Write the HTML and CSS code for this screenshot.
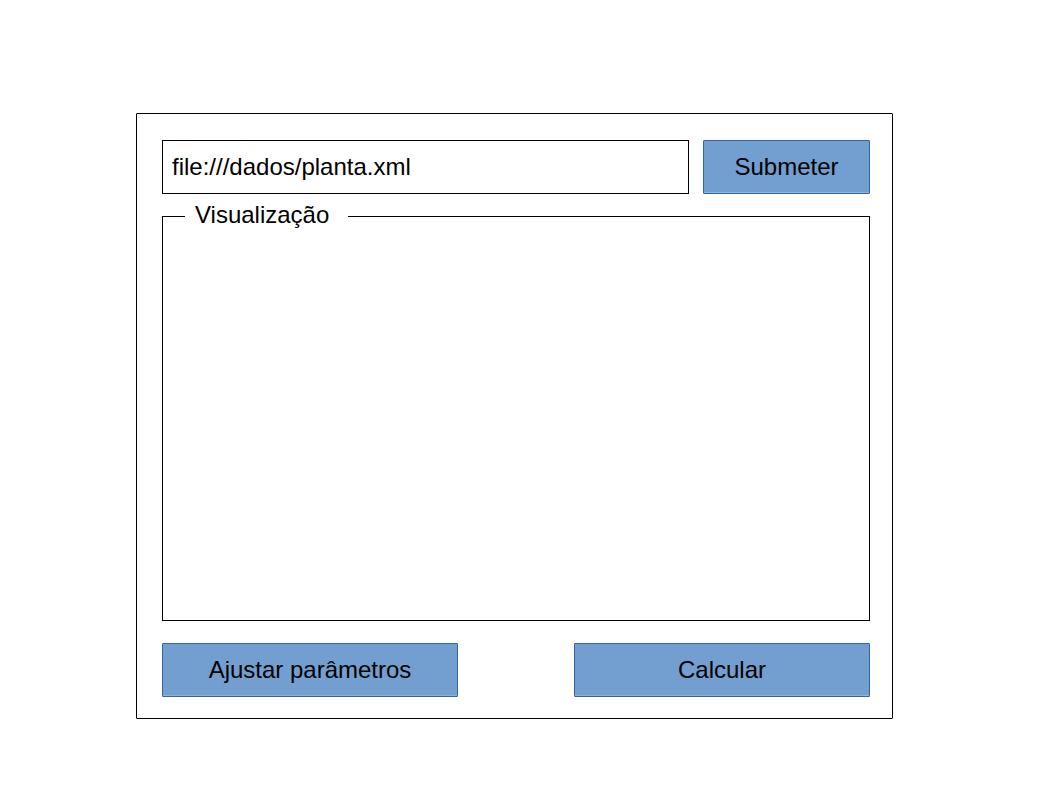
FILE: index.html
```html
<!DOCTYPE html>
<html lang="pt">
<head>
<meta charset="utf-8">
<meta name="viewport" content="width=device-width, initial-scale=1">
<title>Visualização</title>
<link rel="stylesheet" href="styles.css">
</head>
<body>
<main class="page">
  <form class="window">
    <div class="source-row">
      <input class="source-input" type="text" value="file:///dados/planta.xml" aria-label="Arquivo" spellcheck="false">
      <button class="button button-submit" type="button">Submeter</button>
    </div>
    <fieldset class="viewer">
      <legend class="viewer-title">Visualização</legend>
    </fieldset>
    <div class="actions">
      <button class="button" type="button">Ajustar parâmetros</button>
      <button class="button" type="button">Calcular</button>
    </div>
  </form>
</main>
</body>
</html>
```

FILE: styles.css
```css
* {
  box-sizing: border-box;
}

body {
  margin: 0;
  background: #fff;
  color: #000;
  font-family: "Liberation Sans", Arial, sans-serif;
  font-size: 24px;
  line-height: 28px;
}

.page {
  display: flex;
  min-height: 100vh;
  padding: 113px 165px 75px 136px;
}

.window {
  display: flex;
  flex: 1;
  flex-direction: column;
  min-width: 0;
  padding: 26px 22px 21px 25px;
  border: 1px solid #000;
  border-radius: 1px;
}

.source-row {
  display: flex;
  gap: 14px;
}

.source-input,
.button {
  height: 54px;
  border: 1px solid #000;
  color: inherit;
  font: inherit;
}

.source-input {
  flex: 1;
  min-width: 0;
  padding: 0 9px;
  background: #fff;
}

.button {
  padding: 0 16px;
  border-color: #3465a4;
  border-radius: 1px;
  background: #729fcf;
  box-shadow: inset 0 -1px #8fb3dc;
}

.button-submit {
  flex: 0 0 167px;
}

.viewer {
  flex: 1;
  min-width: 0;
  margin: 7px 0 22px;
  padding: 0 22px;
  border: 1px solid #000;
}

.viewer-title {
  padding: 0 19px 2px 10px;
}

.actions {
  display: grid;
  grid-template-columns: 1fr 1fr;
  gap: 116px;
}
```
